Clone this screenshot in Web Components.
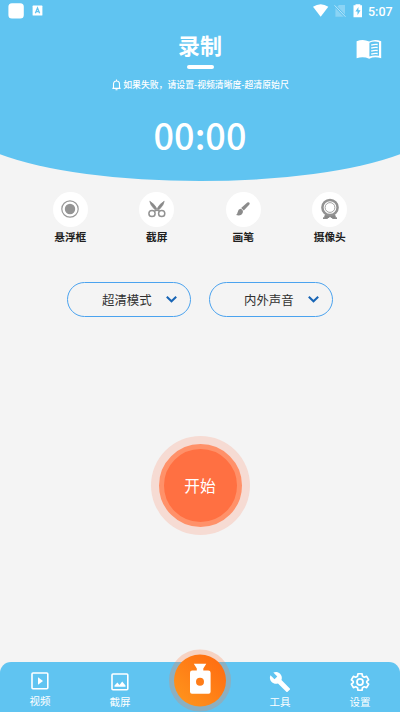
<!DOCTYPE html>
<html lang="zh-CN"><head><meta charset="utf-8"><title>录制</title>
<style>html,body{margin:0;height:100%;overflow:hidden;background:#f4f4f4;font-family:"Noto Sans CJK SC",sans-serif}</style></head>
<body><recorder-app></recorder-app>
<script>
const define=(name,markup)=>customElements.define(name,class extends HTMLElement{
  constructor(){super();const t=document.createElement('template');t.innerHTML=markup;
    this.attachShadow({mode:'open'}).append(t.content.cloneNode(true));}
});
define('status-bar',`<style>:host{display:flex;height:22px;box-sizing:border-box;padding:0 7px 0 8px;align-items:center;color:#fff}
svg{display:block}.gap{flex:1}span{font:500 12.5px/23px Roboto,sans-serif;margin-left:6px;width:25px;white-space:nowrap}</style>
<svg width="36" height="22"><rect x=".4" y="3.2" width="15.4" height="15.2" rx="3.5" fill="#fff"/><rect x="24.6" y="5.6" width="9.8" height="10" rx=".6" fill="#fff"/><path d="M27.4 13.3l2.1-5.3 2.1 5.3M28.2 11.6h2.6" fill="none" stroke="#60c4f1" stroke-width="1.3"/></svg>
<i class="gap"></i>
<svg width="50" height="22" viewBox="312 0 50 22"><path d="M313 6.8q7.7-5.2 15.3 0L320.7 16.8z" fill="#fff"/><path d="M339 5h6v11.7h-9.6V8.3z" fill="#fff" opacity=".27"/><path d="M334.5 5.3l11 11.5" stroke="#60c4f1" stroke-width="2.5"/><path d="M334.5 5.3l11 11.5" stroke="#fff" stroke-opacity=".55"/><path d="M353.5 5.3h2V4.2h4.8v1.1h1.7v12h-8.5z" fill="#fff"/><path d="M358.4 7l-3 4.6h2.1v3.7l3-5h-2.1z" fill="#60c4f1"/></svg><span>5:07</span>`);
define('record-header',`<style>:host{display:grid;height:182px;position:relative;grid-template-rows:22px 50px 25px 85px;color:#fff;isolation:isolate}
.curve{position:absolute;inset:0;z-index:-1}.title{display:grid;grid-template-columns:72px 1fr 72px}
h1{margin:7px 0 0;font-size:22px;line-height:30px;font-weight:700;text-align:center}h1:after{content:"";display:block;width:27px;height:4px;border-radius:2px;background:#fff;margin:6px auto 0}
.book{margin:17px 0 0 28px}.hint{display:flex;justify-content:center;align-items:center;gap:2px;font-size:8.85px;font-weight:500;white-space:nowrap;padding-left:1px}.time{font-size:36px;line-height:75px;font-weight:500;text-align:center}</style>
<svg class="curve" width="400" height="182"><path d="M0 0H400V154.2A240 60 0 0 1 0 154.2Z" fill="#60c4f1"/></svg>
<status-bar></status-bar><div class="title"><i></i><h1>录制</h1><svg class="book" width="27" height="22" viewBox="0 0 27 22"><path d="M.6 2.3Q7-.5 13.2 2.5 19-.5 25.2 2.3V19.3Q18.8 17 13.2 19.7 7 17 .6 19.3z" fill="#fff"/><path d="M13.4 3.8Q18 1.7 23 3.3v13.5q-5-1-9.6.8z" fill="#60c4f1"/><path d="M15.2 6.2q3.3-1.2 6.5-.7M15.2 9.2q3.3-1.2 6.5-.7M15.2 12.2q3.3-1.2 6.5-.7M15.2 15.2q3.3-1.2 6.5-.7" fill="none" stroke="#fff" stroke-width="1.3"/></svg></div>
<div class="hint"><svg width="9" height="12" viewBox="0 0 9 12" fill="none" stroke="#fff" stroke-width="1.1"><path d="M.4 9.4h8.2M1.5 9V5.2Q1.5 2 4.5 2t3 3.2V9M4.5 2V.6M3.5 10.8h2"/></svg><span>如果失败，请设置-视频清晰度-超清原始尺</span></div><div class="time">00:00</div>`);
define('round-tool',`<style>:host{display:flex;flex-direction:column;align-items:center;color:#202020;font-size:10.7px;font-weight:700;line-height:18px}.disc{width:35px;height:35px;border-radius:50%;background:#fff;display:grid;place-items:center}.label{margin-top:1px;white-space:nowrap}</style><div class="disc"><slot name="icon"></slot></div><div class="label"><slot></slot></div>`);
define('option-select',`<style>:host{display:grid;grid-template-columns:34px 1fr 38px;align-items:center;width:124px;height:35.5px;box-sizing:border-box;border:1.2px solid #4ba3ef;border-radius:18px;color:#303030;font-size:12.4px;white-space:nowrap}span{padding-top:1px}svg{margin-left:13px}</style><i></i><span><slot></slot></span><svg width="13" height="9" viewBox="0 0 13 9"><path d="M1.8 1.7L6.5 6.3 11.2 1.7" fill="none" stroke="#1865b5" stroke-width="2"/></svg>`);
define('start-button',`<style>:host{display:grid;place-items:center;width:99px;height:99px;border-radius:50%;background:#f6dbd3}button{width:83px;height:83px;border-radius:50%;border:5px solid #ff9169;background:#ff7042;color:#fff;font:400 15.7px "Noto Sans CJK SC",sans-serif;padding:0}</style><button><slot></slot></button>`);
define('nav-item',`<style>:host{display:flex;flex-direction:column;align-items:center;color:#fff;font-size:10.5px;line-height:16px}.i{height:22px;display:grid;place-items:center}.t{margin-top:1px}</style><div class="i"><slot name="icon"></slot></div><div class="t"><slot></slot></div>`);
define('bottom-nav',`<style>:host{display:grid;grid-template-columns:repeat(5,1fr);height:50px;box-sizing:border-box;padding-top:8px;background:#60c4f1;border-radius:11px 11px 0 0;position:relative}.record{position:absolute;left:169px;top:-13px}.low{padding-top:1px}</style>
<nav-item><svg slot="icon" width="18" height="18" viewBox="0 0 18 18" fill="none" stroke="#fff" stroke-width="1.6"><rect x="1" y="1" width="15.8" height="15.8" rx="1"/><path d="M7 5.2v7.6l5-3.8z" fill="#fff" stroke="none"/></svg>视频</nav-item>
<nav-item class="low"><svg slot="icon" width="18" height="18" viewBox="0 0 18 18" fill="none" stroke="#fff" stroke-width="1.6"><rect x="1" y="1" width="15.8" height="15.8" rx="1"/><path d="M3.5 13.8V12.5l2.9-3 2.1 2.4L11.2 8.6l3.3 3.9v1.3z" fill="#fff" stroke="none"/></svg>截屏</nav-item><i></i>
<nav-item class="low"><svg slot="icon" width="22" height="22" viewBox="0 0 24 24" fill="#fff"><path d="M22.7 19l-9.1-9.1c.9-2.3.4-5-1.5-6.9-2-2-5-2.4-7.4-1.3L9 6 6 9 1.6 4.7C.4 7.1.9 10.1 2.9 12.1c1.9 1.9 4.6 2.4 6.9 1.5l9.1 9.1c.4.4 1 .4 1.4 0l2.3-2.3c.5-.4.5-1.1.1-1.4z"/></svg>工具</nav-item>
<nav-item class="low"><svg slot="icon" width="22" height="22" viewBox="0 0 24 24" fill="none" stroke="#fff" stroke-width="1.9" stroke-linejoin="round"><path d="M9.8 3h4.4l.5 2.6 2 1.2 2.5-.9 2.2 3.8-2 1.7v1.2l2 1.7-2.2 3.8-2.5-.9-2 1.2-.5 2.6H9.8l-.5-2.6-2-1.2-2.5.9-2.2-3.8 2-1.7v-1.2l-2-1.7 2.2-3.8 2.5.9 2-1.2z"/><circle cx="12" cy="12" r="3.3"/></svg>设置</nav-item>
<svg class="record" width="62" height="63" viewBox="0 0 62 63"><defs><linearGradient id="g" x1="0" y1="1" x2="1" y2="0"><stop stop-color="#ff981d"/><stop offset="1" stop-color="#ff6810"/></linearGradient></defs><circle cx="31" cy="31.5" r="31" fill="#ff7b3d" opacity=".27"/><circle cx="31" cy="31.5" r="26" fill="url(#g)"/><path d="M24.8 14.8h12.5l-3 4.6v2h5q2.3 0 2.3 2.3v19q0 2-2 2H23q-2 0-2-2v-19q0-2.3 2.3-2.3h4.5v-2z" fill="#fff"/><circle cx="31" cy="32.7" r="4" fill="#ff7c18"/></svg>`);
define('recorder-app',`<style>:host{display:flex;flex-direction:column;width:400px;height:712px;background:#f4f4f4}.tools{display:grid;grid-template-columns:repeat(4,1fr);padding:9.5px 27px 0;height:90.5px;box-sizing:border-box}.options{display:flex;justify-content:center;gap:18px;margin-top:9px}.start{flex:1;display:flex;justify-content:center;align-items:flex-start;padding-top:119px}</style>
<record-header></record-header><div class="tools">
<round-tool><svg slot="icon" width="20" height="20" viewBox="0 0 20 20"><circle cx="10" cy="10" r="8.2" fill="none" stroke="#999" stroke-width="1.2"/><circle cx="10" cy="10" r="5.2" fill="#949494"/></svg>悬浮框</round-tool>
<round-tool><svg slot="icon" width="20" height="20" viewBox="0 0 20 20" fill="none" stroke="#929292" stroke-width="1.5"><circle cx="5" cy="14.5" r="3.1"/><circle cx="14.7" cy="14.5" r="3.1"/><path d="M7.3 12.3Q10 10.3 12.7 12.3M10 9.5v2"/><path d="M2.8 2.3q5 3 6.9 7.3l-1.7 1.1Q3.2 6.2 2.8 2.3zM17.2 2.3q-5 3-6.9 7.3l1.7 1.1q4.8-4.5 5.2-8.4z" fill="#888" stroke-width=".8"/></svg>截屏</round-tool>
<round-tool><svg slot="icon" width="20" height="20" viewBox="0 0 20 20" fill="#8b8b8b"><path d="M14.3 3.5q1.7-.8 2.3.5.3.8-.4 1.8l-5.4 5.6-2.7-2.5z"/><path d="M7.4 9.7q2.9.5 2.5 3.5-1.5 4.5-6.9 2.9 1.3-.8 1.7-3.2.5-2.7 2.7-3.2z"/></svg>画笔</round-tool>
<round-tool><svg slot="icon" width="22" height="24" viewBox="0 0 22 24"><path d="M6.4 17.5q0 2.4-2.4 3.9h4.2L11 19.4l2.8 2H18q-2.3-1.4-2.4-3.9" fill="#888" stroke="#888"/><circle cx="11" cy="10.5" r="7.6" fill="#fff" stroke="#929292" stroke-width="2.5"/><circle cx="11" cy="10.5" r="4.9" fill="none" stroke="#999" stroke-width=".9"/></svg>摄像头</round-tool>
</div><div class="options"><option-select>超清模式</option-select><option-select>内外声音</option-select></div><div class="start"><start-button>开始</start-button></div><bottom-nav></bottom-nav>`);
</script></body></html>
